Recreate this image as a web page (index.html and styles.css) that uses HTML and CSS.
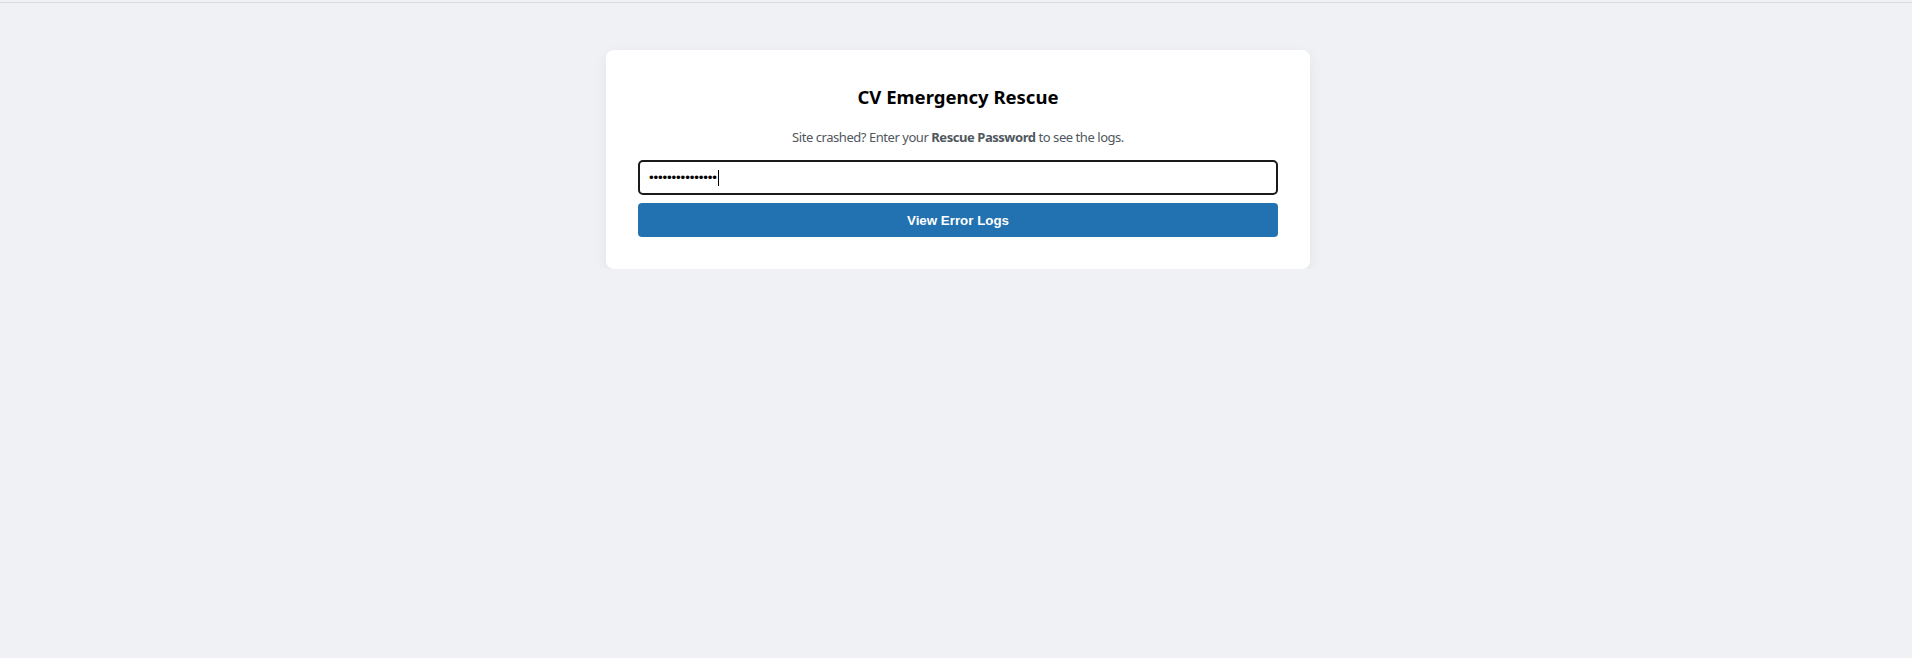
FILE: index.html
```html
<!DOCTYPE html>
<html lang="en">
<head>
<meta charset="utf-8">
<title>CV Emergency Rescue</title>
<link rel="stylesheet" href="styles.css">
</head>
<body>
<div class="topline"></div>
<main class="page">
  <div class="card">
    <h3 class="title">CV Emergency Rescue</h3>
    <p class="lead">Site crashed? Enter your <strong>Rescue Password</strong> to see the logs.</p>
    <form class="form">
      <div class="field"><span class="dots">•••••••••••••••</span><span class="caret"></span></div>
      <button type="button" class="btn">View Error Logs</button>
    </form>
  </div>
</main>
</body>
</html>
```
FILE: styles.css
```css
html, body {
  margin: 0;
  padding: 0;
  background: #f0f1f5;
}
body {
  font-family: "Noto Sans", "Open Sans", sans-serif;
  color: #000;
}
.topline {
  height: 2px;
  border-bottom: 1px solid #dcdcde;
}
.page {
  display: flex;
  justify-content: center;
  padding-top: 47px;
  padding-left: 4px;
}
.card {
  width: 640px;
  padding: 32px;
  background: #fff;
  border-radius: 8px;
  box-shadow: 0 4px 14px rgba(0, 0, 0, 0.06);
}
.title {
  margin: 2px 0 0;
  text-align: center;
  font-size: 18.5px;
  font-weight: 700;
  line-height: 26px;
}
.lead {
  margin: 18px 0 0;
  text-align: center;
  font-size: 13px;
  line-height: 18px;
  letter-spacing: -0.45px;
  color: #50575e;
}
.lead strong {
  font-weight: 700;
}
.form {
  display: flex;
  flex-direction: column;
  gap: 8px;
  margin-top: 14px;
}
.field {
  box-sizing: border-box;
  height: 35px;
  border: 2px solid #1a1a1a;
  border-radius: 5px;
  display: flex;
  align-items: center;
  padding: 0 9px;
  font-family: "Liberation Sans", Arial, sans-serif;
  font-size: 13.33px;
  color: #000;
}
.dots {
  letter-spacing: -0.15px;
}
.caret {
  display: inline-block;
  width: 1px;
  height: 16px;
  background: #000;
  margin-left: 1px;
}
.btn {
  box-sizing: border-box;
  height: 34px;
  border: 0;
  border-radius: 4px;
  background: #2271b1;
  color: #fff;
  font-family: "Liberation Sans", Arial, sans-serif;
  font-size: 13.33px;
  font-weight: 700;
  padding: 0;
}
```
